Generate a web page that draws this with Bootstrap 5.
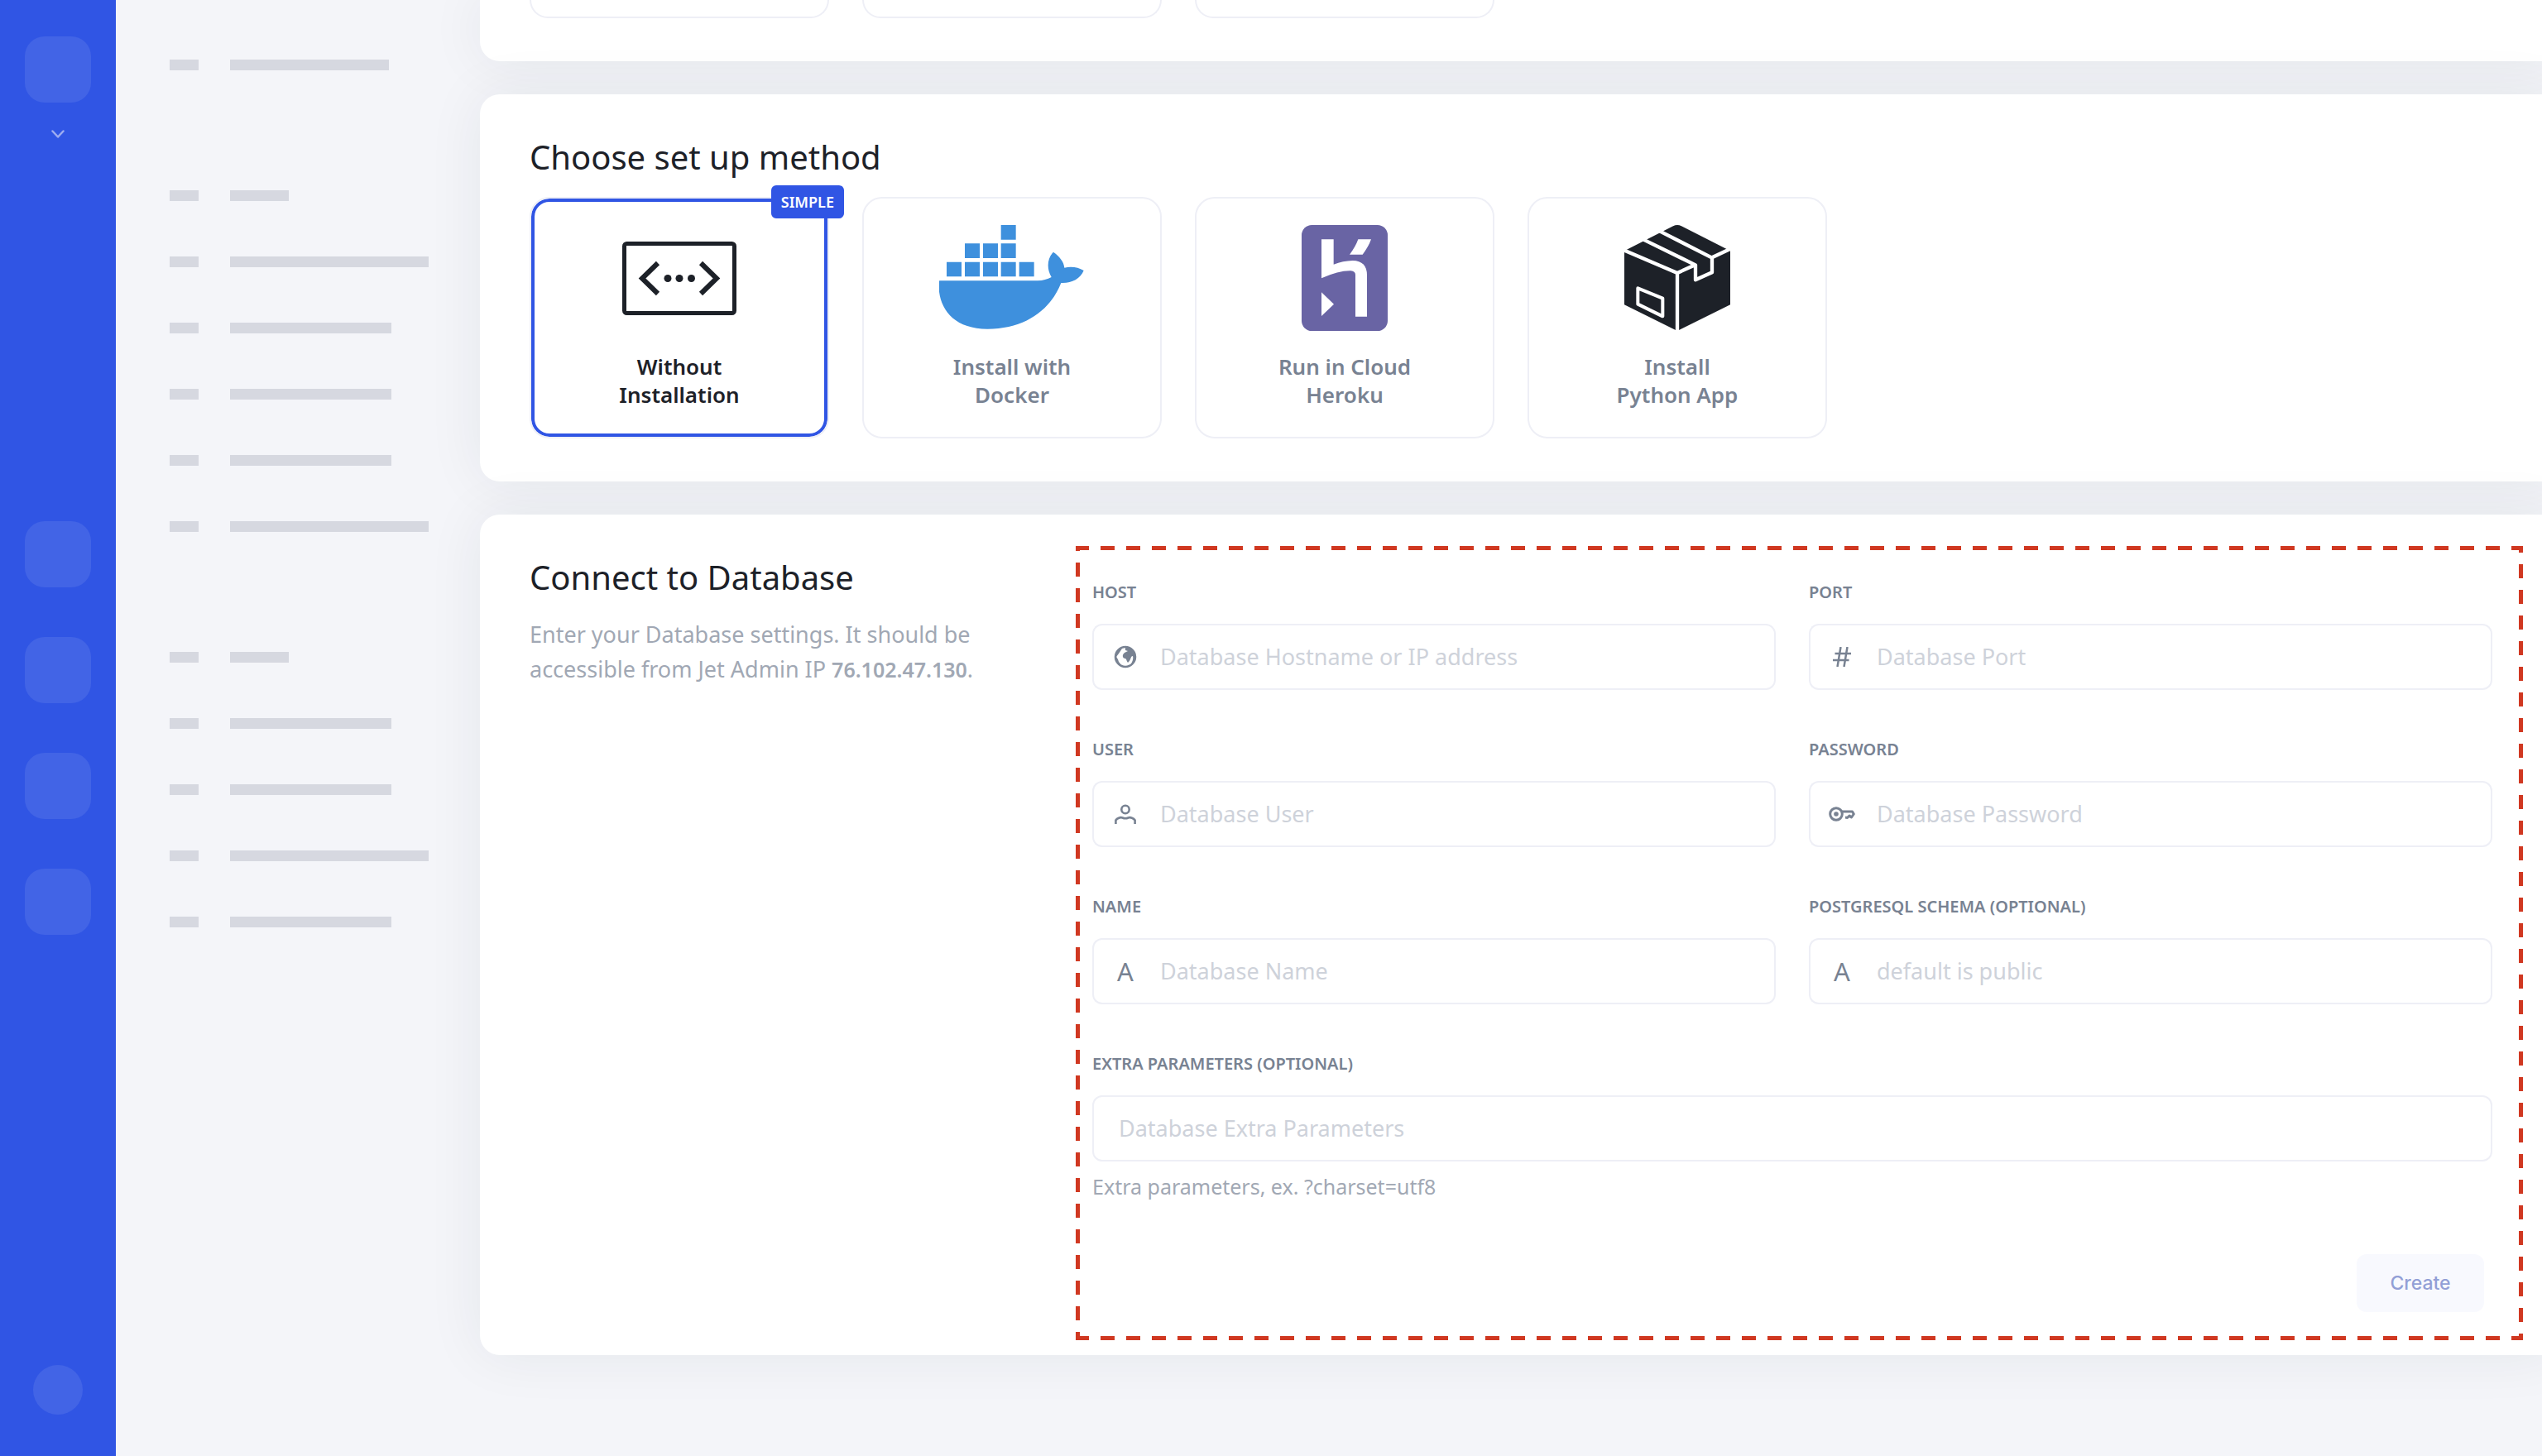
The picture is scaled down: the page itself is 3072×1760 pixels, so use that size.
<!DOCTYPE html>
<html lang="en">
<head>
<meta charset="utf-8">
<meta name="viewport" content="width=device-width, initial-scale=1">
<title>Connect to Database</title>
<link href="https://cdn.jsdelivr.net/npm/bootstrap@5.3.0/dist/css/bootstrap.min.css" rel="stylesheet">
<style>
  :root { --blue: #3055e4; --ink: #1d2128; --slate: #788292; --line: #eeeff6; }
  body { background: #f4f5f9; color: var(--ink); font-family: "Noto Sans", sans-serif; }
  .shell { min-height: 100vh; overflow: hidden; }

  /* Workspace rail */
  .rail { width: 140px; background: var(--blue); padding: 44px 0 50px; }
  .rail-tile { width: 80px; height: 80px; border-radius: 24px; background: #4264e6; }
  .rail-nav { margin-top: 463px; gap: 60px; }
  .rail-chevron { margin-top: 33px; }
  .rail-user { width: 60px; height: 60px; background: #4264e6; }

  /* Placeholder menu */
  .menu { width: 440px; padding: 72px 50px 0 65px; gap: 145px; }
  .menu-group { gap: 67px; }
  .bar-row { gap: 38px; }
  .bar { height: 13px; background: #d6d8e0; width: 195px; }
  .bar-key { width: 35px; }
  .bar-xs { width: 71px; }
  .bar-md { width: 192px; }
  .bar-lg { width: 240px; }

  /* Panels run on past the right edge of the window */
  .panels { gap: 40px; margin-right: -24px; }
  .panel { background: #fff; border-radius: 24px; box-shadow: 0 0 68px rgba(30, 40, 60, .07); padding: 52px 47px 52px 60px; }
  .panel-cut { padding-top: 0; border-top-left-radius: 0; }
  .panel-form { padding-top: 38px; padding-bottom: 18px; }
  .panel-title { font-size: 40px; line-height: 48px; font-weight: 400; margin-bottom: 24px; }

  .tiles { gap: 40px; }
  .tile { width: 362px; height: 292px; padding: 32px 20px; gap: 26px; border: 2px solid var(--line); border-radius: 24px; background: #fff; color: var(--slate); font-size: 26px; line-height: 34px; font-weight: 600; }
  .tile-cut { height: 22px; padding: 0; border-top: 0; border-radius: 0 0 24px 24px; }
  .tile-art { height: 128px; }
  .tile-on { color: var(--ink); box-shadow: inset 0 0 0 4px var(--blue); }
  .tile-tag { top: -16px; right: -20px; height: 40px; padding: 0 12px; border-radius: 6px; background: var(--blue); color: #fff; font-size: 18px; line-height: 40px; }

  .intro { flex: 0 0 660px; padding-top: 14px; }
  .intro p { font-size: 27px; line-height: 42px; color: #a1a8b4; }
  .intro strong { font-size: 25px; font-weight: 600; }

  /* Dashed frame, 17px dash in a 31px step */
  .frame {
    --dash-x: linear-gradient(90deg, #d03821 17px, transparent 17px);
    --dash-y: linear-gradient(180deg, #d03821 17px, transparent 17px);
    background: var(--dash-x) -1px 0 / 31px 5px repeat-x, var(--dash-x) -1px 100% / 31px 5px repeat-x,
                var(--dash-y) 0 -11px / 5px 31px repeat-y, var(--dash-y) 100% -9px / 5px 31px repeat-y;
    padding: 44px 37px 34px 20px;
  }
  .fields { display: grid; grid-template-columns: 1fr 1fr; column-gap: 40px; row-gap: 60px; }
  .field-wide { grid-column: 1 / -1; }
  .field-label { display: block; font-size: 20px; line-height: 24px; font-weight: 600; color: var(--slate); margin-bottom: 26px; text-transform: uppercase; }
  .box { height: 80px; padding-bottom: 8px; border: 2px solid var(--line); border-radius: 12px; font-size: 27px; color: var(--ink); background: #fff; }
  .input-group > .box { padding-left: 2px; border-left: 0; }
  .box-icon { width: 81px; height: 80px; padding: 0 3px 0 0; justify-content: center; border: 2px solid var(--line); border-right: 0; border-radius: 12px; background: #fff; color: var(--slate); font-size: 31px; }
  .box-plain { padding-left: 30px; }
  .box::placeholder { color: #ced2da; opacity: 1; }
  .hint { font-size: 25px; line-height: 30px; color: #a1a8b4; margin-top: 15px; }
  .btn-create { width: 154px; height: 70px; margin: 67px 10px 0 0; border: 0; border-radius: 12px; font-family: Inter, sans-serif; font-size: 23px; font-weight: 500; }
  .btn-create:disabled { background: #f8f9fe; color: #929fd6; opacity: 1; }
</style>
<script src="https://cdn.jsdelivr.net/npm/bootstrap@5.3.0/dist/js/bootstrap.bundle.min.js" defer></script>
</head>
<body>
<div class="shell d-flex">

  <nav class="rail d-flex flex-column align-items-center flex-shrink-0" aria-label="Workspace">
    <div class="rail-tile"></div>
    <svg class="rail-chevron" width="16" height="10" viewBox="0 0 16 10" fill="none" stroke="#9dacf0" stroke-width="2.500" stroke-linecap="round" stroke-linejoin="round"><path d="M1.500 1.500 8 8.500 14.500 1.500"/></svg>
    <div class="rail-nav d-flex flex-column">
      <div class="rail-tile"></div>
      <div class="rail-tile"></div>
      <div class="rail-tile"></div>
      <div class="rail-tile"></div>
    </div>
    <div class="rail-user rounded-circle mt-auto"></div>
  </nav>

  <aside class="menu d-flex flex-column flex-shrink-0" aria-hidden="true">
    <div class="menu-group d-flex flex-column">
      <div class="bar-row d-flex"><div class="bar bar-key"></div><div class="bar bar-md"></div></div>
    </div>
    <div class="menu-group d-flex flex-column">
      <div class="bar-row d-flex"><div class="bar bar-key"></div><div class="bar bar-xs"></div></div>
      <div class="bar-row d-flex"><div class="bar bar-key"></div><div class="bar bar-lg"></div></div>
      <div class="bar-row d-flex"><div class="bar bar-key"></div><div class="bar"></div></div>
      <div class="bar-row d-flex"><div class="bar bar-key"></div><div class="bar"></div></div>
      <div class="bar-row d-flex"><div class="bar bar-key"></div><div class="bar"></div></div>
      <div class="bar-row d-flex"><div class="bar bar-key"></div><div class="bar bar-lg"></div></div>
    </div>
    <div class="menu-group d-flex flex-column">
      <div class="bar-row d-flex"><div class="bar bar-key"></div><div class="bar bar-xs"></div></div>
      <div class="bar-row d-flex"><div class="bar bar-key"></div><div class="bar"></div></div>
      <div class="bar-row d-flex"><div class="bar bar-key"></div><div class="bar"></div></div>
      <div class="bar-row d-flex"><div class="bar bar-key"></div><div class="bar bar-lg"></div></div>
      <div class="bar-row d-flex"><div class="bar bar-key"></div><div class="bar"></div></div>
    </div>
  </aside>

  <main class="panels d-flex flex-column flex-grow-1">

    <section class="panel panel-cut">
      <div class="tiles d-flex">
        <div class="tile tile-cut"></div>
        <div class="tile tile-cut"></div>
        <div class="tile tile-cut"></div>
      </div>
    </section>

    <section class="panel">
      <h2 class="panel-title">Choose set up method</h2>
      <div class="tiles d-flex flex-wrap">

        <button type="button" class="tile tile-on position-relative d-flex flex-column align-items-center" aria-pressed="true">
          <span class="tile-tag position-absolute">SIMPLE</span>
          <span class="tile-art d-flex align-items-center">
            <svg width="138" height="89" viewBox="0 0 138 89" fill="none" stroke="#1d2128" stroke-width="6"><rect x="2.500" y="2.500" width="133" height="84" rx="3" stroke-width="5"/><path d="M43 26 24 44.500 43 63M95 26 114 44.500 95 63"/><g fill="#1d2128" stroke="none"><circle cx="55" cy="44.500" r="4.500"/><circle cx="69" cy="44.500" r="4.500"/><circle cx="83.500" cy="44.500" r="4.500"/></g></svg>
          </span>
          <span>Without<br>Installation</span>
        </button>

        <button type="button" class="tile d-flex flex-column align-items-center" aria-pressed="false">
          <span class="tile-art d-flex align-items-center">
            <svg width="176" height="128" viewBox="45 51 528 384" fill="#3e90dd"><path d="M269 51h54v53h-54zM138 118h54v53h-54zM204 118h54v53h-54zM269 118h54v53h-54zM72 185h54v53H72zM138 185h54v53h-54zM204 185h54v53h-54zM269 185h54v53h-54zM335 185h54v53h-54z"/><path d="M46 253H402Q430 252 452 240C434 210 436 172 459 149C482 165 497 185 499 206C524 200 549 204 569 216C556 247 524 263 487 261C450 355 362 428 220 428C90 428 38 345 44 256Z"/></svg>
          </span>
          <span>Install with<br>Docker</span>
        </button>

        <button type="button" class="tile d-flex flex-column align-items-center" aria-pressed="false">
          <span class="tile-art d-flex align-items-center">
            <svg width="104" height="128" viewBox="0 0 312 384"><rect width="312" height="384" rx="37" fill="#6964a4"/><path fill="#fff" d="M72 52H116V143Q150 130 185 129Q237 130 237 182V332H195V180Q195 168 178 166Q135 165 72 193ZM205 52H252Q242 80 221 107H174Q195 80 205 52ZM72 244 117 287 72 330Z"/></svg>
          </span>
          <span>Run in Cloud<br>Heroku</span>
        </button>

        <button type="button" class="tile d-flex flex-column align-items-center" aria-pressed="false">
          <span class="tile-art d-flex align-items-center">
            <svg width="128" height="128" viewBox="0 0 384 384"><path fill="#1d2128" d="M0 94 177 4Q192-4 207 4L384 94V289L192 384 0 289Z"/><g fill="none" stroke="#fff" stroke-width="13" stroke-linejoin="round"><path d="M-6 89 192 174 258 144M318 118 390 84M192 174V390M68 52 258 145V199L318 172V119L128 22"/><path stroke-width="12" d="M49 229 139 266V331L49 287Z"/></g></svg>
          </span>
          <span>Install<br>Python App</span>
        </button>

      </div>
    </section>

    <section class="panel panel-form d-flex">
      <div class="intro">
        <h2 class="panel-title">Connect to Database</h2>
        <p class="mb-0">Enter your Database settings. It should be<br>accessible from Jet Admin IP <strong>76.102.47.130</strong>.</p>
      </div>

      <form class="frame flex-grow-1">
        <div class="fields">
          <div>
            <label class="field-label" for="host">Host</label>
            <div class="input-group flex-nowrap">
              <span class="input-group-text box-icon">
                <svg width="28" height="28" viewBox="0 0 28 28"><circle cx="14" cy="14" r="12" fill="none" stroke="currentColor" stroke-width="2.500"/><path fill="currentColor" d="M14 2C20 2 26 7 26 14C26 18 24 21 21 23C22 20 24 17 23 13C20 13 21 18 17 21C15 19 16 17 14 16C10 16 10 11 13 9L17 7L14 6Z"/><path fill="currentColor" d="M6 5 10 4 8 7 6 10 3 14 5 17 6 20 10 25 5 22 2 17V10Z"/></svg>
              </span>
              <input class="form-control box" id="host" type="text" placeholder="Database Hostname or IP address">
            </div>
          </div>
          <div>
            <label class="field-label" for="port">Port</label>
            <div class="input-group flex-nowrap">
              <span class="input-group-text box-icon">
                <svg width="22" height="24" viewBox="0 0 22 24" fill="none" stroke="currentColor" stroke-width="2.500"><path d="M9.500 0 5.500 24M17.500 0 13.500 24M2.500 8H22M0 16H19.500"/></svg>
              </span>
              <input class="form-control box" id="port" type="text" placeholder="Database Port">
            </div>
          </div>
          <div>
            <label class="field-label" for="user">User</label>
            <div class="input-group flex-nowrap">
              <span class="input-group-text box-icon">
                <svg width="26" height="24" viewBox="0 0 26 24" fill="none" stroke="currentColor" stroke-width="2.600"><circle cx="13" cy="6.500" r="4.700"/><path d="M1.400 24V19.500C3 17 7 15.500 9.500 16.500Q13 18 16.500 16.500C19 15.500 23 17 24.600 19.500V24"/></svg>
              </span>
              <input class="form-control box" id="user" type="text" placeholder="Database User">
            </div>
          </div>
          <div>
            <label class="field-label" for="password">Password</label>
            <div class="input-group flex-nowrap">
              <span class="input-group-text box-icon">
                <svg width="32" height="18" viewBox="0 0 32 18" fill="none" stroke="currentColor" stroke-width="3"><circle cx="9" cy="9" r="7.300"/><circle cx="9" cy="9" r="2.800" fill="currentColor" stroke="none"/><path stroke-linejoin="round" d="M16 6H28.500L30.300 9 27.500 13 25 11 22.500 13.500 20 13"/></svg>
              </span>
              <input class="form-control box" id="password" type="password" placeholder="Database Password">
            </div>
          </div>
          <div>
            <label class="field-label" for="dbname">Name</label>
            <div class="input-group flex-nowrap">
              <span class="input-group-text box-icon" aria-hidden="true">A</span>
              <input class="form-control box" id="dbname" type="text" placeholder="Database Name">
            </div>
          </div>
          <div>
            <label class="field-label" for="schema">PostgreSQL schema (optional)</label>
            <div class="input-group flex-nowrap">
              <span class="input-group-text box-icon" aria-hidden="true">A</span>
              <input class="form-control box" id="schema" type="text" placeholder="default is public">
            </div>
          </div>
          <div class="field-wide">
            <label class="field-label" for="extra">Extra parameters (optional)</label>
            <input class="form-control box box-plain" id="extra" type="text" placeholder="Database Extra Parameters" aria-describedby="extra-hint">
            <div class="hint" id="extra-hint">Extra parameters, ex. ?charset=utf8</div>
          </div>
        </div>
        <div class="d-flex justify-content-end">
          <button type="submit" class="btn btn-create" disabled>Create</button>
        </div>
      </form>
    </section>

  </main>
</div>
</body>
</html>
